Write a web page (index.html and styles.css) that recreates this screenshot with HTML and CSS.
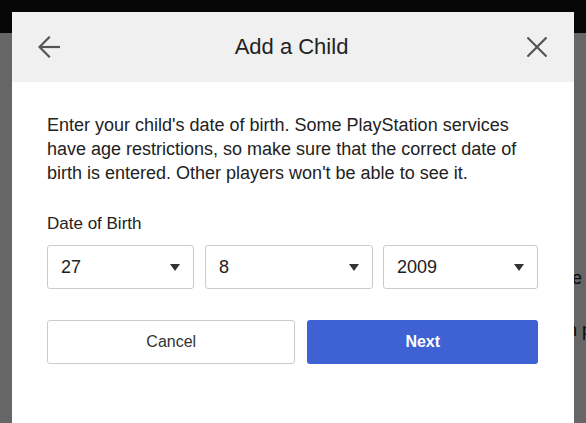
FILE: index.html
```html
<!DOCTYPE html>
<html lang="en">
<head>
<meta charset="utf-8">
<title>Add a Child</title>
<link rel="stylesheet" href="styles.css">
</head>
<body>
<div class="page">
  <div class="topbar"></div>
  <main class="page-main">
    <p class="page-line">the</p>
    <p class="page-line page-line-2">on p</p>
  </main>
</div>
<div class="backdrop"></div>
<section class="modal" role="dialog" aria-labelledby="modal-title">
  <header class="modal-header">
    <button class="icon-btn" aria-label="Back">
      <svg width="22" height="22" viewBox="0 0 22 22" fill="none" stroke="#555" stroke-width="2.2" stroke-linecap="square">
        <path d="M21 11H2.5"/>
        <path d="M11 1.5L1.5 11L11 20.5"/>
      </svg>
    </button>
    <h1 id="modal-title" class="modal-title">Add a Child</h1>
    <button class="icon-btn icon-close" aria-label="Close">
      <svg width="20" height="20" viewBox="0 0 20 20" fill="none" stroke="#555" stroke-width="2.2" stroke-linecap="square">
        <path d="M1.2 1.2L18.8 18.8"/>
        <path d="M18.8 1.2L1.2 18.8"/>
      </svg>
    </button>
  </header>
  <div class="modal-body">
    <p class="intro">Enter your child's date of birth. Some PlayStation services have age restrictions, so make sure that the correct date of birth is entered. Other players won't be able to see it.</p>
    <div class="field-label">Date of Birth</div>
    <div class="dob-row">
      <div class="select select-day"><span>27</span><i class="caret"></i></div>
      <div class="select select-month"><span>8</span><i class="caret"></i></div>
      <div class="select select-year"><span>2009</span><i class="caret"></i></div>
    </div>
    <div class="actions">
      <button class="btn btn-cancel">Cancel</button>
      <button class="btn btn-next">Next</button>
    </div>
  </div>
</section>
</body>
</html>
```

FILE: styles.css
```css
* { box-sizing: border-box; }
html, body {
  margin: 0;
  padding: 0;
  height: 100%;
  overflow: hidden;
  background: #fff;
  font-family: "Liberation Sans", Arial, sans-serif;
}
.page {
  width: 100%;
}
.topbar {
  height: 33px;
  background: #111;
}
.page-main {
  padding: 233px 0 0 557px;
}
.page-line {
  margin: 0;
  font-size: 18px;
  line-height: 24px;
  color: #1a1a1a;
  white-space: nowrap;
}
.page-line-2 {
  margin-top: 28px;
}
.backdrop {
  position: fixed;
  inset: 0;
  background: rgba(0, 0, 0, 0.6);
}
.modal {
  position: fixed;
  left: 12px;
  top: 12px;
  width: 562px;
  height: 460px;
  background: #fff;
  display: flex;
  flex-direction: column;
}
.modal-header {
  height: 70px;
  background: #f0f0f0;
  display: flex;
  align-items: center;
  justify-content: space-between;
  padding: 0 27px 0 26px;
}
.icon-btn {
  border: 0;
  background: none;
  padding: 0;
  width: 22px;
  height: 22px;
  display: flex;
}
.icon-close {
  width: 20px;
  height: 20px;
}
.modal-title {
  margin: 0;
  font-size: 22px;
  font-weight: normal;
  color: #222;
  padding-right: 4px;
}
.modal-body {
  padding: 31px 36px 0 35px;
}
.intro {
  margin: 0;
  font-size: 18px;
  line-height: 24px;
  color: #222;
}
.field-label {
  margin-top: 29px;
  font-size: 17px;
  line-height: 20px;
  color: #222;
}
.dob-row {
  margin-top: 11px;
  display: flex;
  gap: 11px;
}
.select {
  height: 44px;
  border: 1px solid #ccc;
  border-radius: 3px;
  display: flex;
  align-items: center;
  justify-content: space-between;
  padding: 0 13px 0 13px;
  font-size: 18px;
  color: #222;
}
.select-day { width: 147px; }
.select-month { width: 168px; }
.select-year { width: 155px; margin-left: -1px; }
.caret {
  width: 0;
  height: 0;
  border-left: 5px solid transparent;
  border-right: 5px solid transparent;
  border-top: 7px solid #333;
  margin-top: 1px;
}
.actions {
  margin-top: 31px;
  display: flex;
  gap: 12px;
}
.btn {
  height: 44px;
  border-radius: 3px;
  font-family: "Liberation Sans", Arial, sans-serif;
  font-size: 16px;
  cursor: pointer;
}
.btn-cancel {
  width: 249px;
  background: #fff;
  border: 1px solid #ccc;
  color: #333;
}
.btn-next {
  width: 231px;
  background: #3e62d3;
  border: 0;
  color: #fff;
  font-weight: bold;
}
```
